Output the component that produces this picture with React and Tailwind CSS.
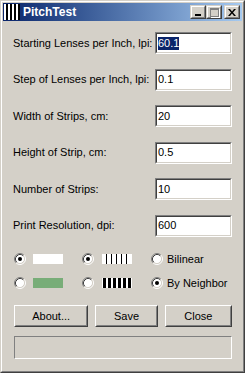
import React from 'react';

const fields = [
  { label: 'Starting Lenses per Inch, lpi:', value: '60.1', selected: true },
  { label: 'Step of Lenses per Inch, lpi:', value: '0.1' },
  { label: 'Width of Strips, cm:', value: '20' },
  { label: 'Height of Strip, cm:', value: '0.5' },
  { label: 'Number of Strips:', value: '10' },
  { label: 'Print Resolution, dpi:', value: '600' },
];

function Radio({ checked }) {
  return (
    <svg width="12" height="12" viewBox="0 0 12 12" className="shrink-0">
      <circle cx="6" cy="6" r="4.5" fill="#fff" />
      <path d="M2.11 9.89 A5.5 5.5 0 0 1 9.89 2.11" stroke="#808080" fill="none" />
      <path d="M9.89 2.11 A5.5 5.5 0 0 1 2.11 9.89" stroke="#fff" fill="none" />
      <path d="M2.82 9.18 A4.5 4.5 0 0 1 9.18 2.82" stroke="#404040" fill="none" />
      <path d="M9.18 2.82 A4.5 4.5 0 0 1 2.82 9.18" stroke="#d4d0c8" fill="none" />
      {checked && <circle cx="6" cy="6" r="2" fill="#000" />}
    </svg>
  );
}

function ThinStripes() {
  return (
    <svg width="30" height="10" viewBox="0 0 30 10">
      <rect width="30" height="10" fill="#fff" />
      {[4, 9, 14, 19, 24].map((x) => (
        <rect key={x} x={x} y="0" width="1" height="10" fill="#000" />
      ))}
    </svg>
  );
}

function ThickStripes() {
  return (
    <svg width="30" height="10" viewBox="0 0 30 10">
      <rect width="30" height="10" fill="#fff" />
      {[1, 6, 11, 16, 21, 26].map((x) => (
        <rect key={x} x={x} y="0" width="3" height="10" fill="#000" />
      ))}
    </svg>
  );
}

function CaptionButton({ children, className = '' }) {
  return (
    <div className={`w-[16px] h-[14px] bg-[#d4d0c8] border border-t-[#d4d0c8] border-l-[#d4d0c8] border-r-[#404040] border-b-[#404040] ${className}`}>
      <div className="w-full h-full border border-t-white border-l-white border-r-[#808080] border-b-[#808080] flex items-center justify-center">
        {children}
      </div>
    </div>
  );
}

function Button({ children, w }) {
  return (
    <div className={`${w} h-[22px] border border-t-white border-l-white border-r-[#404040] border-b-[#404040]`}>
      <div className="w-full h-full border border-t-[#d4d0c8] border-l-[#d4d0c8] border-r-[#808080] border-b-[#808080] flex items-center justify-center text-[11px]">
        {children}
      </div>
    </div>
  );
}

export default function App() {
  return (
    <div className="w-[245px] h-[373px] bg-[#d4d0c8] border border-t-[#d4d0c8] border-l-[#d4d0c8] border-r-[#404040] border-b-[#404040] font-['Liberation_Sans',Arial,sans-serif] text-black">
      <div className="h-full border border-t-white border-l-white border-r-[#808080] border-b-[#808080] p-px flex flex-col">
        {/* title bar */}
        <div className="h-[18px] shrink-0 flex items-center bg-gradient-to-r from-[#0a246a] to-[#a6caf0] pl-px pr-[2px]">
          <svg width="16" height="16" viewBox="0 0 16 16" className="shrink-0">
            <rect width="16" height="16" fill="#fff" />
            {[2, 6, 10, 14].map((x) => (
              <rect key={x} x={x} y="0" width="2" height="16" fill="#000" />
            ))}
          </svg>
          <span className="ml-[3px] text-white font-bold text-[12px] leading-none">PitchTest</span>
          <div className="ml-auto flex items-center">
            <CaptionButton>
              <div className="w-[6px] h-[2px] bg-black mt-[6px] -ml-px" />
            </CaptionButton>
            <CaptionButton>
              <div className="w-[9px] h-[9px] border border-t-2 border-[#808080] shadow-[1px_1px_0_#fff]" />
            </CaptionButton>
            <CaptionButton className="ml-[2px]">
              <svg width="8" height="7" viewBox="0 0 8 7">
                <path d="M0 0h2l2 2.5L6 0h2L5 3.5 8 7H6L4 4.5 2 7H0l3-3.5z" fill="#000" />
              </svg>
            </CaptionButton>
          </div>
        </div>

        {/* body */}
        <div className="flex-1 px-[10px] pt-[11px] flex flex-col text-[11px]">
          <div className="flex flex-col gap-[14.5px]">
            {fields.map((f) => (
              <div key={f.label} className="h-[22px] flex items-center justify-between">
                <span>{f.label}</span>
                <div className="w-[77px] h-[22px] border border-t-[#808080] border-l-[#808080] border-r-white border-b-white">
                  <div className="w-full h-full bg-white border border-t-[#404040] border-l-[#404040] border-r-[#d4d0c8] border-b-[#d4d0c8] flex items-center pl-px">
                    {f.selected ? (
                      <span className="bg-[#0a246a] text-white leading-[13px]">{f.value}</span>
                    ) : (
                      <span className="leading-[13px]">{f.value}</span>
                    )}
                  </div>
                </div>
              </div>
            ))}
          </div>

          <div className="mt-[14.5px] flex flex-col gap-[8px] ml-px">
            <div className="h-[16px] flex items-center">
              <div className="w-[68px] flex items-center gap-[7px]">
                <Radio checked />
                <div className="w-[30px] h-[10px] bg-white" />
              </div>
              <div className="w-[69px] flex items-center gap-[8px]">
                <Radio checked />
                <ThinStripes />
              </div>
              <div className="flex items-center gap-[4px]">
                <Radio />
                <span>Bilinear</span>
              </div>
            </div>
            <div className="h-[16px] flex items-center">
              <div className="w-[68px] flex items-center gap-[7px]">
                <Radio />
                <div className="w-[30px] h-[10px] bg-[#78ad78]" />
              </div>
              <div className="w-[69px] flex items-center gap-[8px]">
                <Radio />
                <ThickStripes />
              </div>
              <div className="flex items-center gap-[4px]">
                <Radio checked />
                <span>By Neighbor</span>
              </div>
            </div>
          </div>

          <div className="mt-[14px] ml-px flex gap-[7px]">
            <Button w="w-[75px]">About...</Button>
            <Button w="w-[63px]">Save</Button>
            <Button w="w-[68px]">Close</Button>
          </div>

          <div className="mt-[9px] ml-px w-[218px] h-[23px] border border-t-[#808080] border-l-[#808080] border-r-white border-b-white" />
        </div>
      </div>
    </div>
  );
}
